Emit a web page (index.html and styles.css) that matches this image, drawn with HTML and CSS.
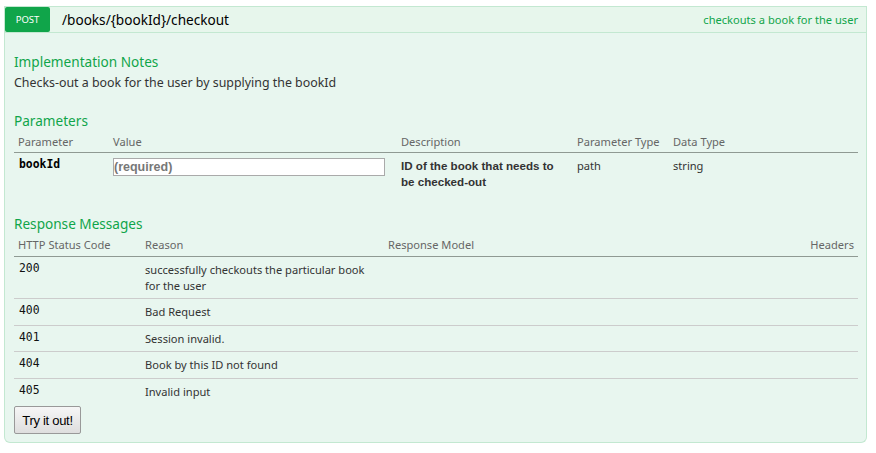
FILE: index.html
```html
<!DOCTYPE html>
<html>
<head>
<meta charset="utf-8">
<link rel="stylesheet" href="styles.css">
</head>
<body>
<div class="page">
  <div class="op">
    <div class="heading">
      <span class="method">POST</span>
      <span class="path">/books/{bookId}/checkout</span>
      <span class="summary">checkouts a book for the user</span>
    </div>
    <div class="content">
      <h4 class="section first">Implementation Notes</h4>
      <p class="notes">Checks-out a book for the user by supplying the bookId</p>

      <h4 class="section">Parameters</h4>
      <table class="params">
        <colgroup>
          <col class="c-param"><col class="c-value"><col class="c-desc"><col class="c-ptype"><col>
        </colgroup>
        <thead>
          <tr><th>Parameter</th><th>Value</th><th>Description</th><th>Parameter Type</th><th>Data Type</th></tr>
        </thead>
        <tbody>
          <tr>
            <td class="code">bookId</td>
            <td><input class="req" type="text" placeholder="(required)"></td>
            <td class="desc">ID of the book that needs to be checked-out</td>
            <td>path</td>
            <td>string</td>
          </tr>
        </tbody>
      </table>

      <h4 class="section">Response Messages</h4>
      <table class="responses">
        <colgroup>
          <col class="c-status"><col class="c-reason"><col><col class="c-headers">
        </colgroup>
        <thead>
          <tr><th>HTTP Status Code</th><th>Reason</th><th>Response Model</th><th class="right">Headers</th></tr>
        </thead>
        <tbody>
          <tr><td class="code">200</td><td>successfully checkouts the particular book for the user</td><td></td><td></td></tr>
          <tr><td class="code">400</td><td>Bad Request</td><td></td><td></td></tr>
          <tr><td class="code">401</td><td>Session invalid.</td><td></td><td></td></tr>
          <tr><td class="code">404</td><td>Book by this ID not found</td><td></td><td></td></tr>
          <tr><td class="code">405</td><td>Invalid input</td><td></td><td></td></tr>
        </tbody>
      </table>
      <button class="try">Try it out!</button>
    </div>
  </div>
</div>
</body>
</html>
```
FILE: styles.css
```css
html, body {
  margin: 0;
  padding: 0;
  background: #fff;
}
body {
  font-family: "Noto Sans", "Open Sans", sans-serif;
  color: #333;
}
.page {
  padding: 6px 8px 0 4px;
}
.op {
  width: 863px;
}
.heading {
  display: flex;
  align-items: center;
  background: #e7f6ec;
  border: 1px solid #c3e8d1;
  height: 25px;
  padding-right: 8px;
}
.method {
  background: #10a54a;
  color: #fff;
  width: 45px;
  height: 25px;
  line-height: 25px;
  text-align: center;
  font-size: 9.5px;
  border-radius: 2px;
  flex: none;
}
.path {
  font-size: 13.6px;
  color: #000;
  padding-left: 12px;
  flex: 1;
}
.summary {
  font-size: 11.1px;
  color: #10a54a;
}
.content {
  background: #e8f6ef;
  border: 1px solid #c3e8d1;
  border-top: none;
  border-radius: 0 0 6px 6px;
  padding: 0 8px 8px 9px;
}
.section {
  margin: 0;
  padding: 18px 0 2px;
  font-size: 13.6px;
  font-weight: normal;
  color: #10a54a;
  line-height: 21px;
}
.notes {
  margin: 0;
  font-size: 12.4px;
  line-height: 18px;
}
table {
  width: 100%;
  border-collapse: collapse;
  font-size: 11.1px;
}
th {
  text-align: left;
  font-weight: normal;
  color: #666;
  padding: 0 4px 2px;
  line-height: 17px;
  border-bottom: 1px solid #8f9a93;
}
th.right { text-align: right; }
td {
  vertical-align: top;
  padding: 5px 4px;
  line-height: 16px;
}
.c-param { width: 95px; }
.c-value { width: 288px; }
.c-desc { width: 176px; }
.c-ptype { width: 96px; }
.c-status { width: 127px; }
.c-reason { width: 243px; }
.c-headers { width: 100px; }
td.code {
  font-family: "DejaVu Sans Mono", monospace;
  font-size: 11.4px;
  padding: 4px 4px 5px 5px;
  line-height: 14px;
}
.params td.code { font-weight: bold; color: #000; }
.params td.desc {
  font-family: "Liberation Sans", Arial, sans-serif;
  font-weight: bold;
  font-size: 11.6px;
  padding-right: 10px;
}
input.req {
  box-sizing: border-box;
  width: 272px;
  height: 18px;
  margin: 0;
  border: 1px solid #aaa;
  background: #fff;
  font-family: "Liberation Sans", Arial, sans-serif;
  font-weight: bold;
  font-size: 12.5px;
  padding: 0;
}
input.req::placeholder { color: #777; }
.responses th { padding-bottom: 3px; }
.responses td { border-bottom: 1px solid #ccc; }
.responses td:not(.code) { line-height: 15.5px; }
.responses tbody tr:last-child td { border-bottom: none; }
.responses td.code { color: #111; font-weight: normal; }
.try {
  display: block;
  margin-top: 2px;
  height: 28px;
  width: 67px;
  padding: 0;
  font-family: "Liberation Sans", Arial, sans-serif;
  font-size: 13px;
  letter-spacing: -0.3px;
  color: #000;
  border: 1px solid #999;
  border-radius: 2px;
  background: linear-gradient(#f6f6f6, #dedede);
}
```
